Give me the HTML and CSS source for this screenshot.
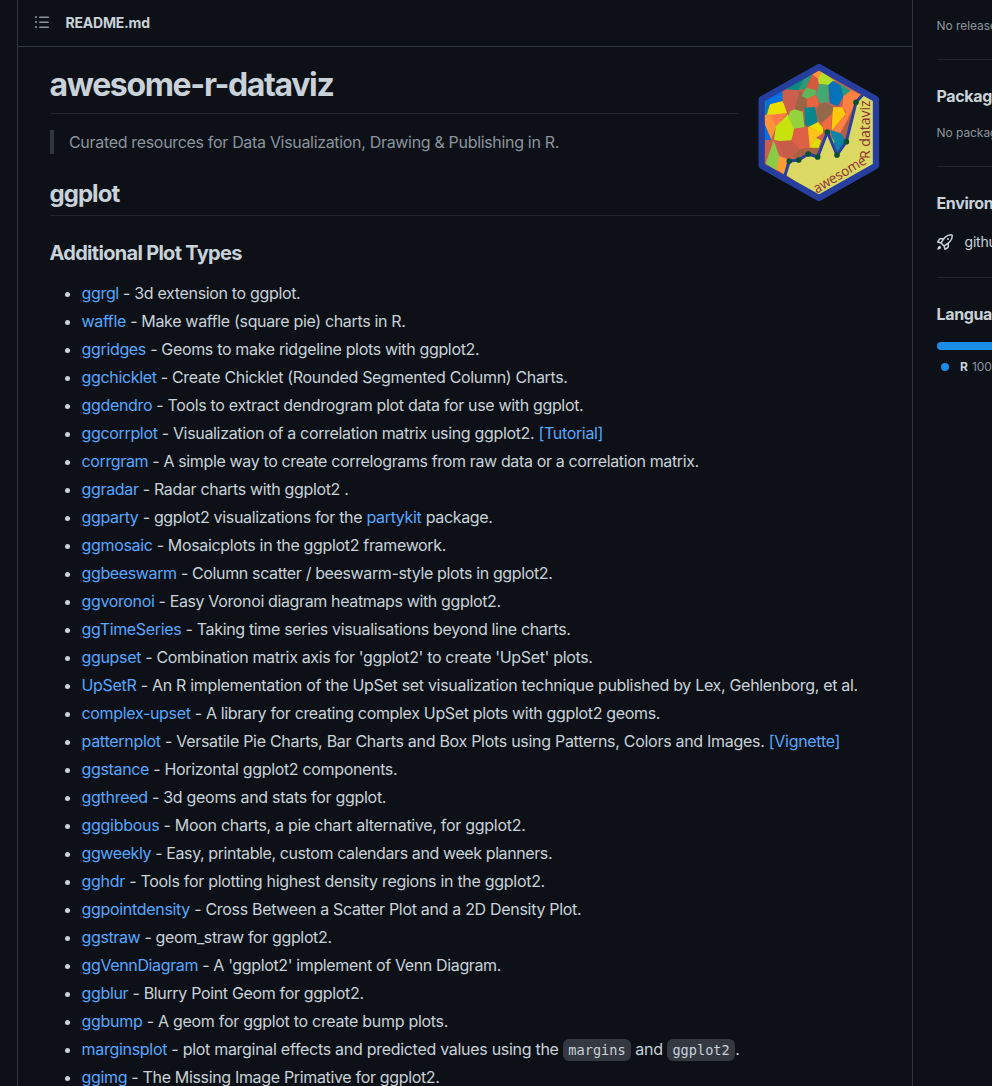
FILE: index.html
```html
<!DOCTYPE html>
<html lang="en">
<head>
<meta charset="utf-8">
<title>awesome-r-dataviz</title>
<link rel="stylesheet" href="styles.css">
</head>
<body>
<div class="layout">
<main class="readme">
<header class="readme-header">
<svg class="toc-icon" width="16" height="16" viewBox="0 0 16 16"><path fill="currentColor" fill-rule="evenodd" d="M2 4a1 1 0 100-2 1 1 0 000 2zm3.75-1.5a.75.75 0 000 1.5h8.5a.75.75 0 000-1.5h-8.5zm0 5a.75.75 0 000 1.5h8.5a.75.75 0 000-1.5h-8.5zm0 5a.75.75 0 000 1.5h8.5a.75.75 0 000-1.5h-8.5zM3 8a1 1 0 11-2 0 1 1 0 012 0zm-1 6a1 1 0 100-2 1 1 0 000 2z"/></svg>
<span class="readme-name">README.md</span>
</header>
<article class="markdown">
<svg class="logo" width="122" height="140" viewBox="24 21 366 420">
<defs><clipPath id="hex"><path d="M207 42L374 138V329L207 423L40 329V138Z"/></clipPath></defs>
<g clip-path="url(#hex)">
<rect x="30" y="30" width="350" height="400" fill="#cc5f4b"/>
<path fill="#0d8b93" d="M30 80H62L62 128L52 180H30Z"/>
<path fill="#0470e2" d="M50 120L100 95L99 138L60 148L45 180Z"/>
<path fill="#e9df00" d="M60 148L99 138L111 175L50 182Z"/>
<path fill="#ff933a" d="M40 180L111 175L78 216L63 256L40 200Z"/>
<path fill="#ff7a45" d="M62 181L111 175L78 214Z"/>
<path fill="#0470e2" d="M40 198L64 254L40 256Z"/>
<path fill="#c7e20c" d="M78 214L114 178L132 222L126 256L88 258L72 254Z"/>
<path fill="#0c8a82" d="M98 102L165 65L146 106Z"/>
<path fill="#269b77" d="M146 106L165 66L190 52L170 100Z"/>
<path fill="#d5593f" d="M168 98L188 55L206 70L203 97L196 103Z"/>
<path fill="#ff933a" d="M186 58L207 42L218 53L205 71Z"/>
<path fill="#b3df28" d="M204 72L216 50L255 78L243 91L207 87Z"/>
<path fill="#cc5f4b" d="M97 106L150 106L134 165L114 172L98 139Z"/>
<path fill="#9b6545" d="M150 106L172 137L170 155L152 170L134 163Z"/>
<path fill="#5eb85a" d="M155 124L168 98L197 105L198 120L172 131Z"/>
<path fill="#e9633e" d="M171 133L197 119L209 154L171 156Z"/>
<path fill="#44a971" d="M198 119L207 87L235 90L235 142L210 145Z"/>
<path fill="#0473ba" d="M235 90L249 77L274 93L281 124L264 154L239 145Z"/>
<path fill="#229a7e" d="M259 80L304 108L280 125L273 94Z"/>
<path fill="#ff8040" d="M280 124L304 106L334 120L314 144L300 190L276 224L288 170L278 157Z"/>
<path fill="#94d33b" d="M120 169L133 163L158 170L163 217L131 222L115 187Z"/>
<path fill="#07868e" d="M163 158L195 156L204 204L172 216L164 207Z"/>
<path fill="#94684a" d="M208 148L225 142L251 155L245 178L216 203L202 196L200 160Z"/>
<path fill="#ed6b43" d="M216 203L246 177L242 222L230 230L220 219Z"/>
<path fill="#ffc80c" d="M250 157L278 157L287 178L245 228L247 182Z"/>
<path fill="#ff8040" d="M287 179L296 195L272 234L247 227Z"/>
<path fill="#e9df00" d="M175 216L204 201L219 218L219 235Z"/>
<path fill="#ffc31b" d="M173 215L219 234L198 249L179 281Z"/>
<path fill="#dce006" d="M181 276L198 249L213 256L206 279L190 284Z"/>
<path fill="#de6147" d="M134 221L172 217L179 276L149 283L124 256Z"/>
<path fill="#c85c4a" d="M85 260L126 257L150 284L127 304L101 305Z"/>
<path fill="#a66245" d="M127 304L150 283L184 278L215 279L205 305L175 297L147 314Z"/>
<path fill="#8acb45" d="M47 326L71 256L88 304L81 347Z"/>
<path fill="#ff9c35" d="M87 303L112 312L104 358L80 344Z"/>
<path fill="#b35f46" d="M292 195L314 147L289 258L271 234Z"/>
<path fill="#0d83a9" d="M241 225L272 235L289 259L261 298Z"/>
<path fill="#7dbe51" d="M240 243L254 258L250 276Z"/>
<path fill="#dbd963" d="M109 360L118 318L146 315L175 297L203 306L232 231L261 300L289 260L318 142L340 120L380 140V330L207 430Z"/>
</g>
<path class="logo-line" d="M104 364L118 318L146 315L175 297L203 306L232 231L261 300L289 260L318 142L341 116"/>
<g fill="#075036"><circle cx="118" cy="318" r="8.5"/><circle cx="146" cy="315" r="8.5"/><circle cx="175" cy="297" r="8.5"/><circle cx="203" cy="306" r="8.5"/><circle cx="232" cy="231" r="8.5"/><circle cx="261" cy="300" r="8.5"/><circle cx="289" cy="260" r="8.5"/><circle cx="318" cy="142" r="8.5"/></g>
<path class="logo-frame" d="M207 36L378 133V332L207 429L35 332V133Z"/>
<text class="logo-text" transform="translate(200 416) rotate(-31)" textLength="178" lengthAdjust="spacingAndGlyphs">awesome</text>
<text class="logo-text" transform="translate(360 312) rotate(-90)" textLength="176" lengthAdjust="spacingAndGlyphs">R dataviz</text>
</svg>
<h1>awesome-r-dataviz</h1>
<blockquote>Curated resources for Data Visualization, Drawing &amp; Publishing in R.</blockquote>
<h2>ggplot</h2>
<h3>Additional Plot Types</h3>
<ul>
<li><a>ggrgl</a> - 3d extension to ggplot.</li>
<li><a>waffle</a> - Make waffle (square pie) charts in R.</li>
<li><a>ggridges</a> - Geoms to make ridgeline plots with ggplot2.</li>
<li><a>ggchicklet</a> - Create Chicklet (Rounded Segmented Column) Charts.</li>
<li><a>ggdendro</a> - Tools to extract dendrogram plot data for use with ggplot.</li>
<li><a>ggcorrplot</a> - Visualization of a correlation matrix using ggplot2. <a>[Tutorial]</a></li>
<li class="tight"><a>corrgram</a> - A simple way to create correlograms from raw data or a correlation matrix.</li>
<li><a>ggradar</a> - Radar charts with ggplot2 .</li>
<li><a>ggparty</a> - ggplot2 visualizations for the <a>partykit</a> package.</li>
<li><a>ggmosaic</a> - Mosaicplots in the ggplot2 framework.</li>
<li class="tight"><a>ggbeeswarm</a> - Column scatter / beeswarm-style plots in ggplot2.</li>
<li class="tight"><a>ggvoronoi</a> - Easy Voronoi diagram heatmaps with ggplot2.</li>
<li><a>ggTimeSeries</a> - Taking time series visualisations beyond line charts.</li>
<li><a>ggupset</a> - Combination matrix axis for 'ggplot2' to create 'UpSet' plots.</li>
<li class="wide"><a>UpSetR</a> - An R implementation of the UpSet set visualization technique published by Lex, Gehlenborg, et al.</li>
<li><a>complex-upset</a> - A library for creating complex UpSet plots with ggplot2 geoms.</li>
<li class="wider"><a>patternplot</a> - Versatile Pie Charts, Bar Charts and Box Plots using Patterns, Colors and Images. <a>[Vignette]</a></li>
<li><a>ggstance</a> - Horizontal ggplot2 components.</li>
<li class="wider"><a>ggthreed</a> - 3d geoms and stats for ggplot.</li>
<li class="wider"><a>gggibbous</a> - Moon charts, a pie chart alternative, for ggplot2.</li>
<li class="tighter"><a>ggweekly</a> - Easy, printable, custom calendars and week planners.</li>
<li class="wider"><a>gghdr</a> - Tools for plotting highest density regions in the ggplot2.</li>
<li class="wide"><a>ggpointdensity</a> - Cross Between a Scatter Plot and a 2D Density Plot.</li>
<li class="tight"><a>ggstraw</a> - geom_straw for ggplot2.</li>
<li class="tight"><a>ggVennDiagram</a> - A 'ggplot2' implement of Venn Diagram.</li>
<li><a>ggblur</a> - Blurry Point Geom for ggplot2.</li>
<li class="wider"><a>ggbump</a> - A geom for ggplot to create bump plots.</li>
<li class="wider"><a>marginsplot</a> - plot marginal effects and predicted values using the <code>margins</code> and <code>ggplot2</code>.</li>
<li><a>ggimg</a> - The Missing Image Primative for ggplot2.</li>
</ul>
</article>
</main>
<aside class="sidebar">
<section class="releases"><p>No releases published</p></section>
<section><h4>Packages</h4><p>No packages published</p></section>
<section class="environments"><h4>Environments</h4>
<div class="env"><svg width="16" height="16" viewBox="0 0 16 16"><path fill="currentColor" fill-rule="evenodd" d="M14.064 0a8.75 8.75 0 00-6.187 2.563l-.459.458c-.314.314-.616.641-.904.979H3.31a1.75 1.75 0 00-1.49.833L.11 7.607a.75.75 0 00.418 1.11l3.102.954c.037.051.079.1.124.145l2.429 2.428c.046.046.094.088.145.125l.954 3.102a.75.75 0 001.11.418l2.774-1.707a1.75 1.75 0 00.833-1.49V9.485c.338-.288.665-.59.979-.904l.458-.459A8.75 8.75 0 0016 1.936V1.75A1.75 1.75 0 0014.25 0h-.186zM10.5 10.625c-.088.06-.177.118-.266.175l-2.35 1.521.548 1.783 1.949-1.2a.25.25 0 00.119-.213v-2.066zM3.678 8.116L5.2 5.766c.058-.09.117-.178.176-.266H3.309a.25.25 0 00-.213.119l-1.2 1.95 1.782.547zm5.26-4.493A7.25 7.25 0 0114.063 1.5h.186a.25.25 0 01.25.25v.186a7.25 7.25 0 01-2.123 5.127l-.459.458a15.21 15.21 0 01-2.499 2.02l-2.317 1.5-2.143-2.143 1.5-2.317a15.25 15.25 0 012.02-2.5l.458-.458zM12 5a1 1 0 11-2 0 1 1 0 012 0zm-8.44 9.56a1.5 1.5 0 10-2.12-2.12c-.734.73-1.047 2.332-1.15 3.003a.23.23 0 00.265.265c.671-.103 2.273-.416 3.005-1.148z"/></svg><span>github-pages</span></div></section>
<section class="languages"><h4>Languages</h4><div class="bar"></div><div class="lang"><i></i><b>R</b><span>100.0%</span></div></section>
</aside>
</div>
</body>
</html>
```
FILE: styles.css
```css
* { box-sizing: border-box; }
body { margin: 0; height: 1086px; overflow: hidden; background: #0d1117; color: #c9d1d9; font-family: Inter, sans-serif; font-size: 16px; line-height: 24px; }
.layout { display: flex; gap: 24px; padding-left: 17px; height: 1086px; overflow: hidden; }
.readme { flex: 0 0 896px; height: 1120px; border: solid #30363d; border-width: 0 1px; }
.readme-header { display: flex; align-items: center; height: 47px; padding: 0 16px; border-bottom: 1px solid #30363d; }
.toc-icon { color: #8b949e; margin-top: -2px; }
.readme-name { margin-left: 15.5px; font-size: 14px; font-weight: 650; letter-spacing: -0.2px; }
.markdown { padding: 16px 32px 0; }
.logo { float: right; margin: -1px 0 0 20px; }
.logo-line { fill: none; stroke: #293f9f; stroke-width: 9; stroke-linejoin: round; }
.logo-frame { fill: none; stroke: #263f9e; stroke-width: 19; stroke-linejoin: round; }
.logo-text { font-family: "Open Sans", sans-serif; font-size: 42px; fill: #8b3138; }
h1, h2, h3, h4, p, ul, blockquote { margin: 0; }
h1, h2, h3, h4 { font-weight: 650; }
h1 { display: flow-root; height: 51px; padding-top: 2px; font-size: 32px; line-height: 40px; letter-spacing: -1.35px; text-indent: -0.5px; border-bottom: 1px solid #21262d; }
blockquote { margin-top: 16px; padding-left: 15px; border-left: 4px solid #30363d; color: #8b949e; letter-spacing: -0.32px; }
h2 { margin-top: 24px; height: 38px; padding-top: 1px; font-size: 24px; line-height: 30px; letter-spacing: -0.95px; text-indent: -0.5px; border-bottom: 1px solid #21262d; }
h3 { margin-top: 24px; padding-top: 1px; font-size: 20px; line-height: 25px; letter-spacing: -0.7px; text-indent: -0.5px; }
ul { margin-top: 15px; padding-left: 31.5px; font-weight: 430; letter-spacing: -0.335px; }
li { height: 24px; margin-bottom: 4px; white-space: nowrap; }
.wide { letter-spacing: -0.31px; }
.wider { letter-spacing: -0.29px; }
.tight { letter-spacing: -0.365px; }
.tighter { letter-spacing: -0.4px; }
a { color: #58a6ff; }
code { padding: 3px 5.5px; border-radius: 6px; background: #343941; font-family: "DejaVu Sans Mono", monospace; font-size: 13.6px; line-height: 16px; letter-spacing: 0; }
.sidebar { flex: 1; min-width: 0; overflow: hidden; white-space: nowrap; }
.sidebar section { height: 107px; border-bottom: 1px solid #21262d; padding-top: 24px; }
.sidebar .releases { height: 60px; padding-top: 14px; }
.sidebar h4 { font-size: 16px; letter-spacing: -0.35px; line-height: 24px; text-indent: -0.5px; }
.sidebar p { margin-top: 13px; font-size: 12px; letter-spacing: -0.05px; text-indent: -0.5px; color: #8b949e; }
.sidebar .releases p { margin: 0; }
.sidebar .environments { height: 111px; }
.env { display: flex; align-items: center; gap: 11.5px; margin-top: 15px; font-size: 14px; letter-spacing: -0.2px; }
.env svg, .lang i { flex: none; }
.sidebar .languages { border: 0; }
.bar { width: 296px; height: 8px; margin-top: 16px; border-radius: 6px; background: #198ce7; }
.lang { display: flex; align-items: center; gap: 4px; height: 18px; margin-top: 8px; padding-left: 4px; font-size: 12px; color: #8b949e; }
.lang i { width: 8px; height: 8px; border-radius: 50%; margin-right: 7px; background: #198ce7; }
.lang b { color: #c9d1d9; font-weight: 650; }
```
